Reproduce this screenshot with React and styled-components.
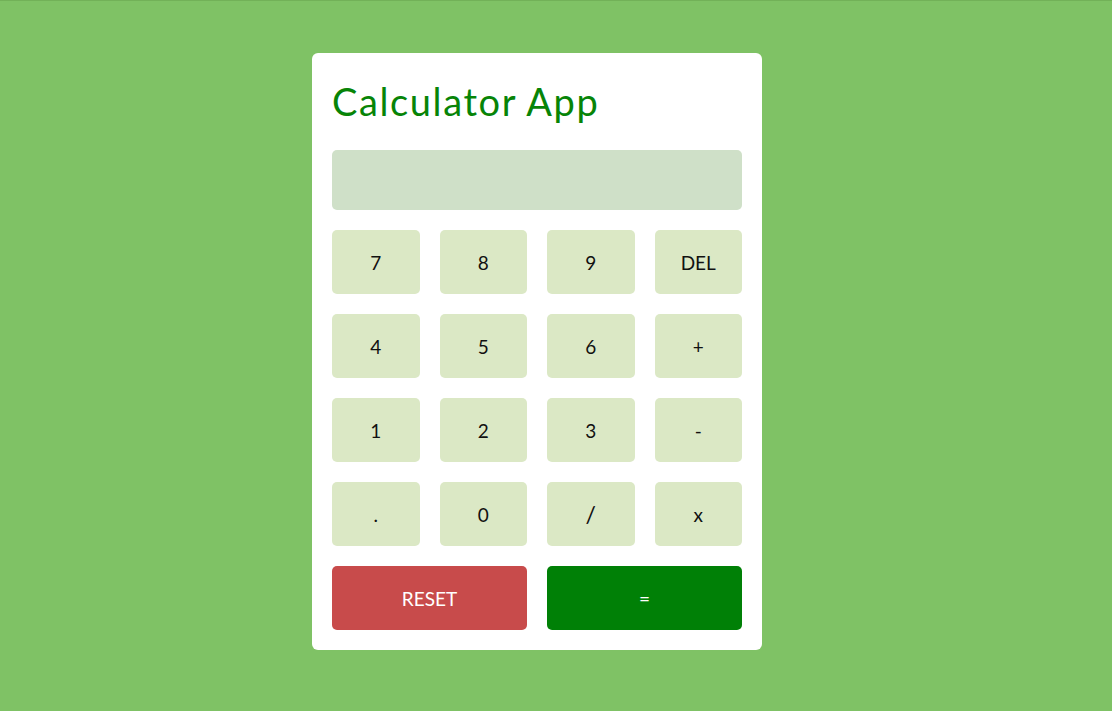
import React, { useState } from "react";
import styled, { createGlobalStyle } from "styled-components";

const GlobalStyle = createGlobalStyle`
  body {
    margin: 0;
    background: #7fc265;
    font-family: "Lato", "Noto Sans", sans-serif;
  }
`;

const Page = styled.div`
  min-height: 711px;
  box-sizing: border-box;
  border-top: 1px solid #72b158;
  padding-top: 52px;
  padding-left: 312px;
`;

const Card = styled.div`
  width: 450px;
  box-sizing: border-box;
  padding: 20px;
  background: #fff;
  border-radius: 6px;
`;

const Title = styled.h1`
  margin: 0 0 20px;
  height: 57px;
  line-height: 56px;
  font-size: 38px;
  font-weight: 400;
  color: #078407;
  letter-spacing: 1.6px;
`;

const Display = styled.div`
  height: 60px;
  background: #cfe0c8;
  border-radius: 5px;
  margin-bottom: 20px;
  display: flex;
  align-items: center;
  justify-content: flex-end;
  padding: 0 16px;
  font-size: 26px;
  color: #222;
`;

const Keys = styled.div`
  display: grid;
  grid-template-columns: repeat(4, 1fr);
  grid-auto-rows: 64px;
  gap: 20px;
`;

const Key = styled.button`
  border: none;
  border-radius: 5px;
  font-family: inherit;
  font-size: ${(p) => (p.$big ? "23px" : "19px")};
  color: ${(p) => (p.$variant ? "#fff" : "#111")};
  background: ${(p) =>
    p.$variant === "reset" ? "#c84b4b" : p.$variant === "equal" ? "#008006" : "#dbe8c5"};
  grid-column: ${(p) => (p.$wide ? "span 2" : "auto")};
  cursor: pointer;
`;

const keys = ["7", "8", "9", "DEL", "4", "5", "6", "+", "1", "2", "3", "-", ".", "0", "/", "x"];

export default function App() {
  const [value, setValue] = useState("");

  const press = (k) => {
    if (k === "DEL") setValue((v) => v.slice(0, -1));
    else setValue((v) => v + k);
  };

  return (
    <Page>
      <GlobalStyle />
      <Card>
        <Title>Calculator App</Title>
        <Display>{value}</Display>
        <Keys>
          {keys.map((k) => (
            <Key key={k} $big={k === "/"} onClick={() => press(k)}>
              {k}
            </Key>
          ))}
          <Key $wide $variant="reset" onClick={() => setValue("")}>
            RESET
          </Key>
          <Key $wide $variant="equal">
            =
          </Key>
        </Keys>
      </Card>
    </Page>
  );
}
